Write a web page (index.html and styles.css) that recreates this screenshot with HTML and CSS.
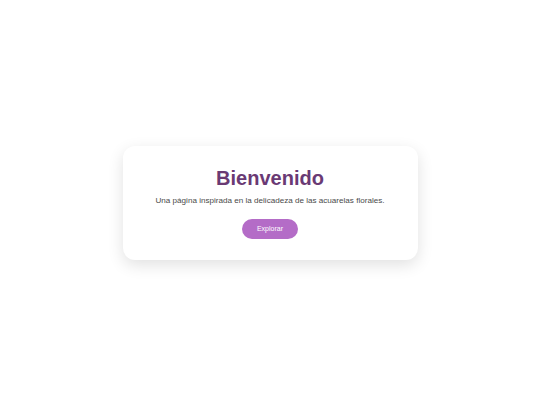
FILE: index.html
```html
<!DOCTYPE html>
<html lang="es">
<head>
<meta charset="utf-8">
<title>Bienvenido</title>
<link rel="stylesheet" href="styles.css">
</head>
<body>
<main class="page">
  <section class="card">
    <h1 class="title">Bienvenido</h1>
    <p class="lead">Una página inspirada en la delicadeza de las acuarelas florales.</p>
    <button class="btn">Explorar</button>
  </section>
</main>
</body>
</html>
```
FILE: styles.css
```css
html, body {
  margin: 0;
  padding: 0;
  background: #ffffff;
  font-family: "Liberation Sans", Arial, sans-serif;
}
.page {
  width: 540px;
  height: 405px;
  display: flex;
  align-items: center;
  justify-content: center;
}
.card {
  width: 295px;
  box-sizing: border-box;
  padding: 21px 20px;
  background: #ffffff;
  border-radius: 12px;
  box-shadow: 0 5px 16px rgba(0, 0, 0, 0.12);
  display: flex;
  flex-direction: column;
  align-items: center;
  text-align: center;
}
.title {
  margin: 0 0 6px;
  font-size: 20px;
  line-height: 23px;
  font-weight: bold;
  color: #6a3a74;
}
.lead {
  margin: 0 0 14px;
  font-size: 8.1px;
  line-height: 9px;
  color: #4a4a4a;
}
.btn {
  width: 56px;
  height: 20px;
  padding: 0;
  border: none;
  border-radius: 10px;
  background: #b46cc7;
  color: #ffffff;
  font-family: "Liberation Sans", Arial, sans-serif;
  font-size: 7px;
  cursor: pointer;
}
```
